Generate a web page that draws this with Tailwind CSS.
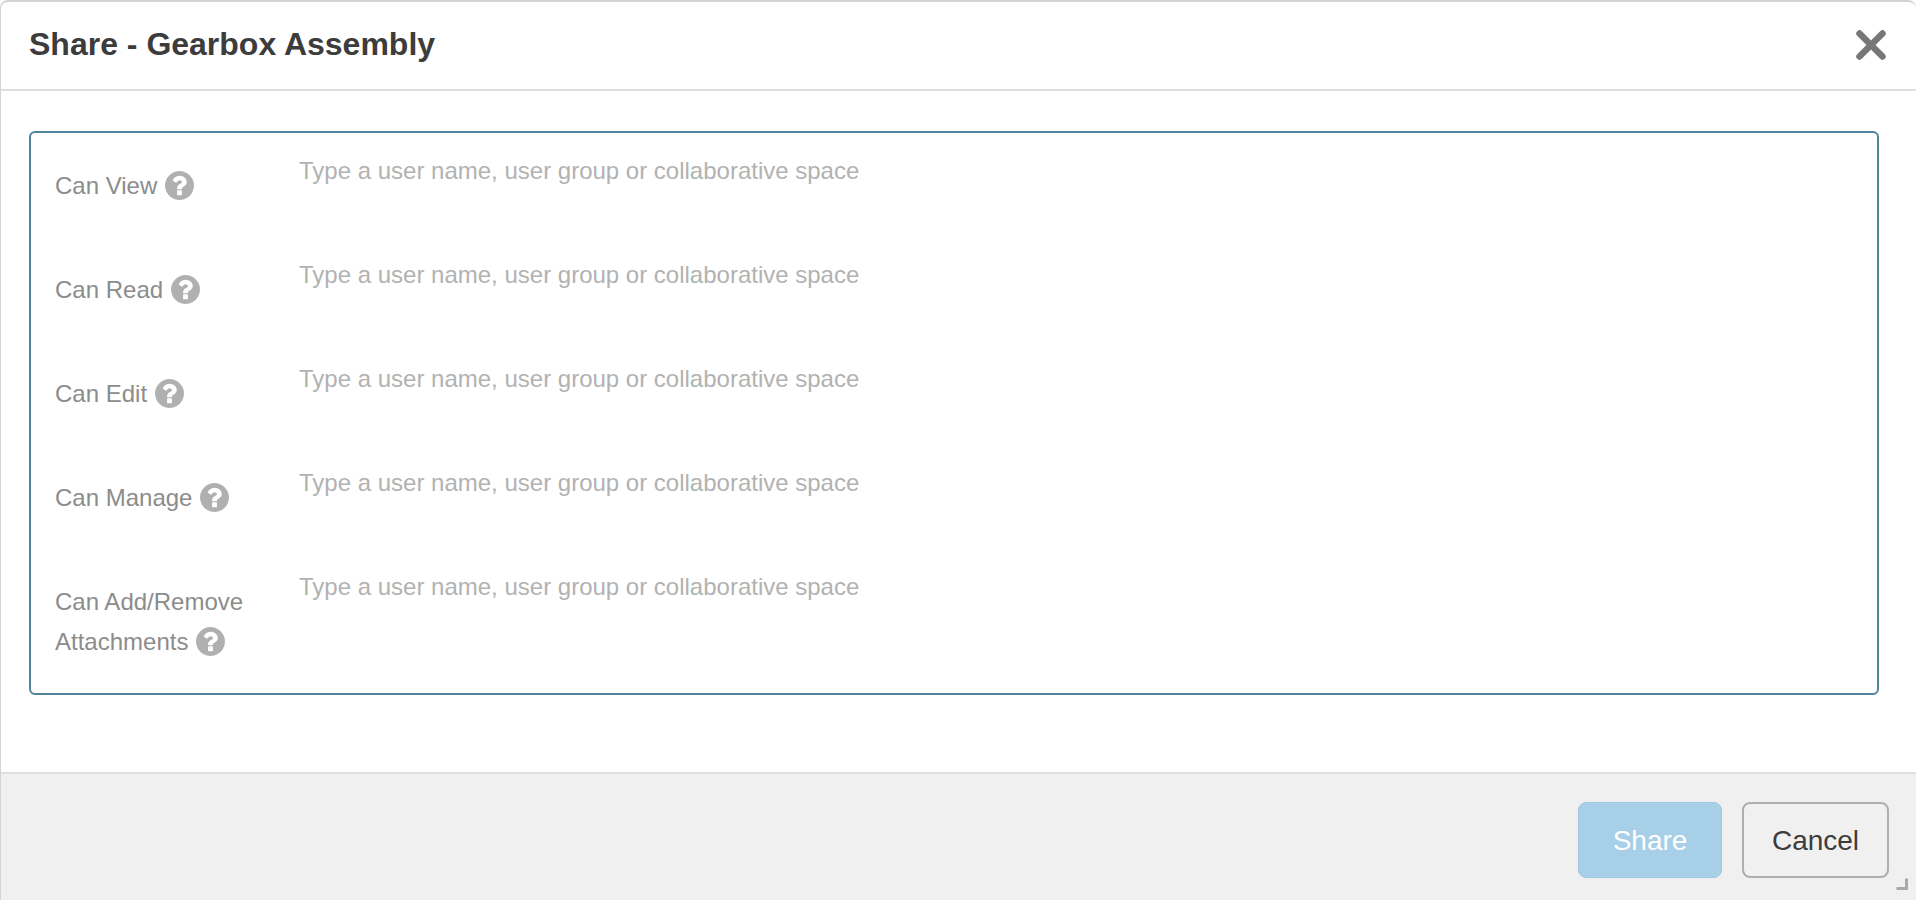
<!DOCTYPE html>
<html lang="en">
<head>
  <meta charset="UTF-8" />
  <title>Share - Gearbox Assembly</title>
  <script src="https://cdn.jsdelivr.net/npm/@tailwindcss/browser@4"></script>
</head>
<body class="bg-white font-['Liberation_Sans',Arial,sans-serif]">
  <svg class="hidden">
    <symbol id="help" viewBox="128 128 1536 1536"><path fill="#b0b0b0" d="M1024 1376v-192q0-14-9-23t-23-9h-192q-14 0-23 9t-9 23v192q0 14 9 23t23 9h192q14 0 23-9t9-23zm256-672q0-88-55.500-163t-138.500-116-170-41q-243 0-371 213-15 24 8 42l132 100q7 6 19 6 16 0 25-12 53-68 86-92 34-24 86-24 48 0 85.500 26t37.500 59q0 38-20 61t-68 45q-63 28-115.500 86.500t-52.500 125.500v36q0 14 9 23t23 9h192q14 0 23-9t9-23q0-19 21.500-49.500t54.500-49.500q32-18 49-28.500t46-35 44.500-48 28-60.500 12.500-81zm384 192q0 209-103 385.500t-279.500 279.500-385.500 103-385.500-103-279.500-279.500-103-385.500 103-385.500 279.500-279.500 385.500-103 385.500 103 279.500 279.500 103 385.500z"/></symbol>
  </svg>

  <div class="relative flex flex-col h-[900px] w-[1916px] overflow-hidden rounded-t-[8px] border-t-2 border-l border-[#d4d4d4]">
    <div class="flex items-center justify-between h-[89px] shrink-0 border-b-2 border-[#dfdfdf] pb-[4px] pl-[28px] pr-[29px]">
      <h1 class="text-[32px] font-bold text-[#3c3c3c]">Share - Gearbox Assembly</h1>
      <svg class="w-[30px] h-[30px] mt-[3px] mr-[1px]" viewBox="0 0 30 30"><path d="M3.500 3.500 26.500 26.500M26.500 3.500 3.500 26.500" stroke="#777" stroke-width="6.500" stroke-linecap="round" fill="none"/></svg>
    </div>

    <div class="flex-1 pt-[40px] pl-[28px] pr-[37px]">
      <div class="h-[564px] rounded-[6px] border-2 border-[#4f849c] pl-[24px] text-[24px]">
        <div class="flex h-[104px] pt-[20px]">
          <div class="w-[244px] pt-[14px] flex items-center h-[44px] mt-[4px] text-[#8c8c8c]">Can View <svg class="w-[29px] h-[29px] ml-[8px] -mt-[2px]"><use href="#help"/></svg></div>
          <div class="text-[#b2b2b2]">Type a user name, user group or collaborative space</div>
        </div>
        <div class="flex h-[104px] pt-[20px]">
          <div class="w-[244px] pt-[14px] flex items-center h-[44px] mt-[4px] text-[#8c8c8c]">Can Read <svg class="w-[29px] h-[29px] ml-[8px] -mt-[2px]"><use href="#help"/></svg></div>
          <div class="text-[#b2b2b2]">Type a user name, user group or collaborative space</div>
        </div>
        <div class="flex h-[104px] pt-[20px]">
          <div class="w-[244px] pt-[14px] flex items-center h-[44px] mt-[4px] text-[#8c8c8c]">Can Edit <svg class="w-[29px] h-[29px] ml-[8px] -mt-[2px]"><use href="#help"/></svg></div>
          <div class="text-[#b2b2b2]">Type a user name, user group or collaborative space</div>
        </div>
        <div class="flex h-[104px] pt-[20px]">
          <div class="w-[244px] pt-[14px] flex items-center h-[44px] mt-[4px] text-[#8c8c8c]">Can Manage <svg class="w-[29px] h-[29px] ml-[8px] -mt-[2px]"><use href="#help"/></svg></div>
          <div class="text-[#b2b2b2]">Type a user name, user group or collaborative space</div>
        </div>
        <div class="flex pt-[20px]">
          <div class="w-[244px] pt-[12px] text-[#8c8c8c]">
            <div class="h-[41px] flex items-center">Can Add/Remove</div>
            <div class="h-[40px] flex items-center">Attachments <svg class="w-[29px] h-[29px] ml-[8px] -mt-[2px]"><use href="#help"/></svg></div>
          </div>
          <div class="text-[#b2b2b2]">Type a user name, user group or collaborative space</div>
        </div>
      </div>
    </div>

    <div class="flex items-start justify-end gap-[20px] h-[128px] shrink-0 bg-[#f0f0f0] border-t-2 border-[#dfdfdf] pt-[28px] pr-[27px]">
      <button class="w-[144px] h-[76px] pt-[2px] rounded-[8px] border border-[#9fc8e0] bg-[#a8cfe8] text-white text-[28px]">Share</button>
      <button class="w-[147px] h-[76px] pt-[2px] rounded-[8px] border-2 border-[#aeaeae] text-[#3c3c3c] text-[28px]">Cancel</button>
    </div>

    <svg class="absolute right-[8px] bottom-[10px] w-[13px] h-[13px]" viewBox="0 0 13 13"><path d="M1.500 11.500H11.500V1.500" stroke="#a8a8a8" stroke-width="3" fill="none"/></svg>
  </div>
</body>
</html>
